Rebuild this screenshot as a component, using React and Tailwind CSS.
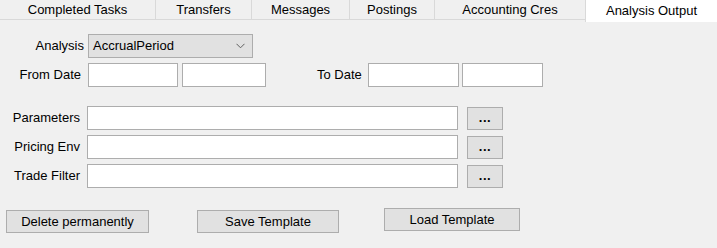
const tabs = [
  { label: "Completed Tasks", w: "w-[155px]" },
  { label: "Transfers", w: "w-[96px]" },
  { label: "Messages", w: "w-[98px]" },
  { label: "Postings", w: "w-[85px]" },
  { label: "Accounting Cres", w: "w-[151px]" },
];

function Box({ className = "" }) {
  return <div className={`h-[24px] bg-white border border-[#adadad] ${className}`} />;
}

function Btn({ children, className = "" }) {
  return (
    <button
      className={`h-[23px] bg-[#e1e1e1] border border-[#adadad] text-[13px] text-black flex items-center justify-center ${className}`}
    >
      {children}
    </button>
  );
}

function PickRow({ label, pr }) {
  return (
    <div className="flex items-center h-[24px]">
      <div className={`w-[87px] text-right ${pr}`}>{label}</div>
      <Box className="w-[371px]" />
      <Btn className="ml-[9px] w-[36px] h-[23px] font-bold text-[#3d2c10] leading-none pb-[2px] tracking-[0.5px]">...</Btn>
    </div>
  );
}

export default function App() {
  return (
    <div
      className="w-[717px] h-[248px] bg-[#f0f0f0] text-[13px] text-black overflow-hidden"
      style={{ fontFamily: '"Liberation Sans", Arial, sans-serif' }}
    >
      {/* tab strip */}
      <div className="flex h-[22px] items-start">
        <div className="flex h-[20px] border-b border-[#d9d9d9]">
          {tabs.map((t, i) => (
            <div
              key={t.label}
              className={`${t.w} h-[19px] flex items-center justify-center pt-[1px] ${i > 0 ? "border-l border-[#d9d9d9]" : ""}`}
            >
              {t.label}
            </div>
          ))}
        </div>
        <div className="w-[132px] h-[22px] bg-white border-l border-[#d9d9d9] flex justify-center pt-[1px]">
          Analysis Output
        </div>
      </div>

      <div className="pt-[12px]">
        {/* analysis */}
        <div className="flex items-center h-[24px]">
          <div className="w-[88px] text-right pr-[4px]">Analysis</div>
          <div className="w-[165px] h-[24px] bg-[#e1e1e1] border border-[#adadad] flex items-center pl-[4px] pr-[6px]">
            <span className="flex-1">AccrualPeriod</span>
            <svg width="9" height="6" viewBox="0 0 9 6" className="mr-[1px]">
              <path d="M0.5 0.8 L4.5 4.8 L8.5 0.8" fill="none" stroke="#606060" strokeWidth="1" />
            </svg>
          </div>
        </div>

        {/* dates */}
        <div className="flex items-center h-[24px] mt-[5px]">
          <div className="w-[88px] text-right pr-[7px]">From Date</div>
          <Box className="w-[90px]" />
          <Box className="w-[84px] ml-[4px]" />
          <div className="ml-[51px] w-[51px] text-left">To Date</div>
          <Box className="w-[91px]" />
          <Box className="w-[81px] ml-[3px]" />
        </div>

        <div className="flex flex-col gap-[5px] mt-[19px]">
          <PickRow label="Parameters" pr="pr-[7px]" />
          <PickRow label="Pricing Env" pr="pr-[7px]" />
          <PickRow label="Trade Filter" pr="pr-[7px]" />
        </div>

        <div className="flex items-start mt-[21px]">
          <Btn className="ml-[6px] w-[143px] mt-[1px]">Delete permanently</Btn>
          <Btn className="ml-[48px] w-[142px] mt-[1px]">Save Template</Btn>
          <Btn className="ml-[45px] w-[136px] mt-[-1px]">Load Template</Btn>
        </div>
      </div>
    </div>
  );
}
